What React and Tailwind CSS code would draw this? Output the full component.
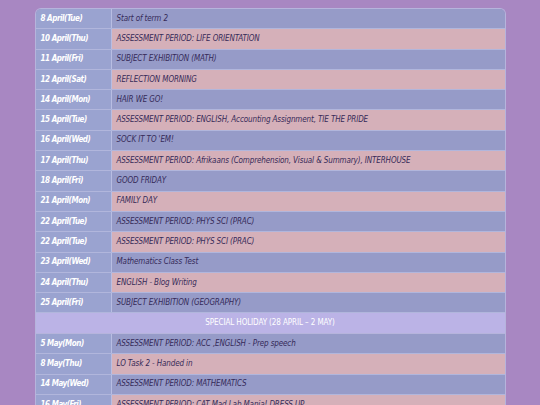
import React from "react";

const rows = [
  ["8 April(Tue)", "Start of term 2"],
  ["10 April(Thu)", "ASSESSMENT PERIOD: LIFE ORIENTATION"],
  ["11 April(Fri)", "SUBJECT EXHIBITION (MATH)"],
  ["12 April(Sat)", "REFLECTION MORNING"],
  ["14 April(Mon)", "HAIR WE GO!"],
  ["15 April(Tue)", "ASSESSMENT PERIOD: ENGLISH, Accounting Assignment, TIE THE PRIDE"],
  ["16 April(Wed)", "SOCK IT TO 'EM!"],
  ["17 April(Thu)", "ASSESSMENT PERIOD: Afrikaans (Comprehension, Visual & Summary), INTERHOUSE"],
  ["18 April(Fri)", "GOOD FRIDAY"],
  ["21 April(Mon)", "FAMILY DAY"],
  ["22 April(Tue)", "ASSESSMENT PERIOD: PHYS SCI (PRAC)"],
  ["22 April(Tue)", "ASSESSMENT PERIOD: PHYS SCI (PRAC)"],
  ["23 April(Wed)", "Mathematics Class Test"],
  ["24 April(Thu)", "ENGLISH - Blog Writing"],
  ["25 April(Fri)", "SUBJECT EXHIBITION (GEOGRAPHY)"],
  null,
  ["5 May(Mon)", "ASSESSMENT PERIOD: ACC ,ENGLISH - Prep speech"],
  ["8 May(Thu)", "LO Task 2 - Handed in"],
  ["14 May(Wed)", "ASSESSMENT PERIOD: MATHEMATICS"],
  ["16 May(Fri)", "ASSESSMENT PERIOD: CAT Mad Lab Mania! DRESS UP"],
];

const font = { fontFamily: '"DejaVu Sans Condensed", "Liberation Sans", sans-serif' };

export default function App() {
  let n = 0;
  return (
    <div className="min-h-[405px] bg-[#a887c2] pt-2" style={font}>
      <div className="mx-auto w-[471px] rounded-t-md overflow-hidden border border-[#b6b4dc] border-b-0">
        {rows.map((r, i) => {
          if (!r) {
            n = 0;
            return (
              <div
                key={i}
                className="h-[20.6px] flex items-center justify-center bg-[#bbb3e6] border-b border-[#b6b4dc] text-white text-[8px] tracking-[-0.1px]"
              >
                SPECIAL HOLIDAY (28 APRIL – 2 MAY)
              </div>
            );
          }
          const pink = n++ % 2 === 1;
          return (
            <div key={i} className="h-[20.3px] flex border-b border-[#b1b6dc]">
              <div className="w-[76px] shrink-0 flex items-center pl-[5px] bg-[#9aa3d0] border-r border-[#b8bde2] text-white text-[8px] font-bold italic tracking-[-0.45px]">
                {r[0]}
              </div>
              <div
                className={
                  "flex-1 flex items-center pl-[5px] text-[8px] italic tracking-[-0.12px] text-[#352a58] whitespace-nowrap " +
                  (pink ? "bg-[#d5b0b9]" : "bg-[#969bc8]")
                }
              >
                {r[1]}
              </div>
            </div>
          );
        })}
      </div>
    </div>
  );
}
